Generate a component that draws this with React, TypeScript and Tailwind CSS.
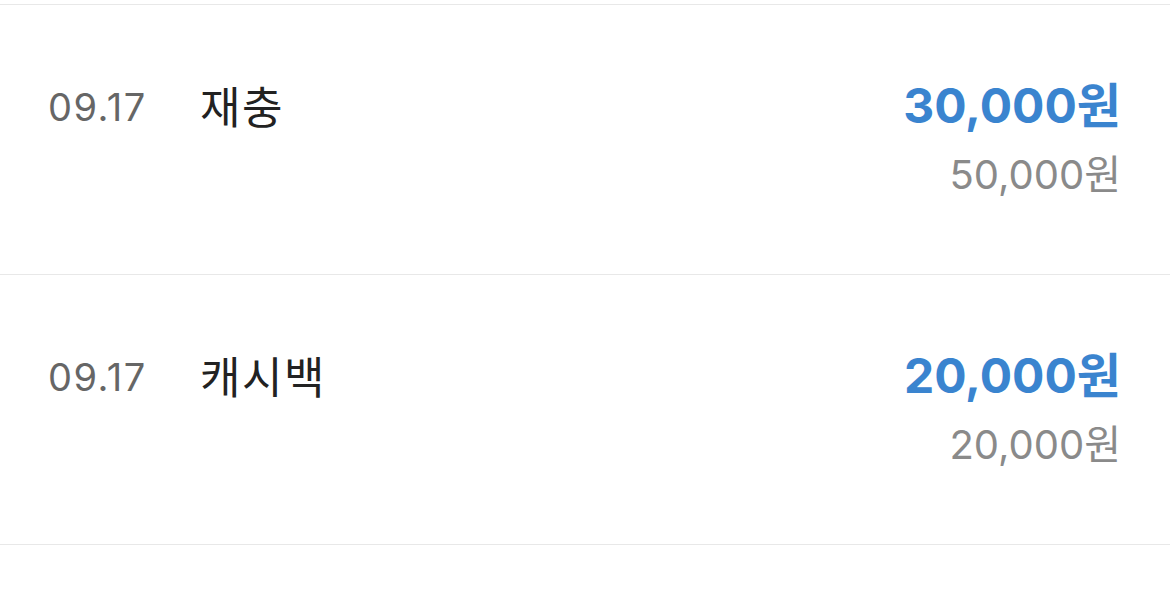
import React from 'react';

const rows = [
  { id: 1, date: '09.17', title: '재충', amount: '30,000원', balance: '50,000원' },
  { id: 2, date: '09.17', title: '캐시백', amount: '20,000원', balance: '20,000원' },
];

export default function App() {
  return (
    <div className="w-[1170px] h-[615px] bg-white overflow-hidden" style={{ fontFamily: 'Inter, "Noto Sans CJK KR", sans-serif' }}>
      <div className="h-[4px]" />
      {rows.map((row) => (
        <div key={row.id} className="h-[270px] border-t border-[#e8e8e8] flex items-start pl-[48px] pr-[49px] pt-[78px]">
          <div className="w-[152px] text-[38px] leading-[48px] text-[#666666] tracking-[1.5px]">{row.date}</div>
          <div className="flex-1 text-[44px] leading-[48px] text-[#222222] tracking-[1.5px] mt-[1px]">{row.title}</div>
          <div className="flex flex-col items-end">
            <div className="text-[48px] leading-[56px] font-bold text-[#3a84cf] -mt-[5px]">{row.amount}</div>
            <div className="text-[40px] leading-[52px] text-[#8a8a8a] mt-[15px]">{row.balance}</div>
          </div>
        </div>
      ))}
      <div className="border-t border-[#e8e8e8]" />
    </div>
  );
}
